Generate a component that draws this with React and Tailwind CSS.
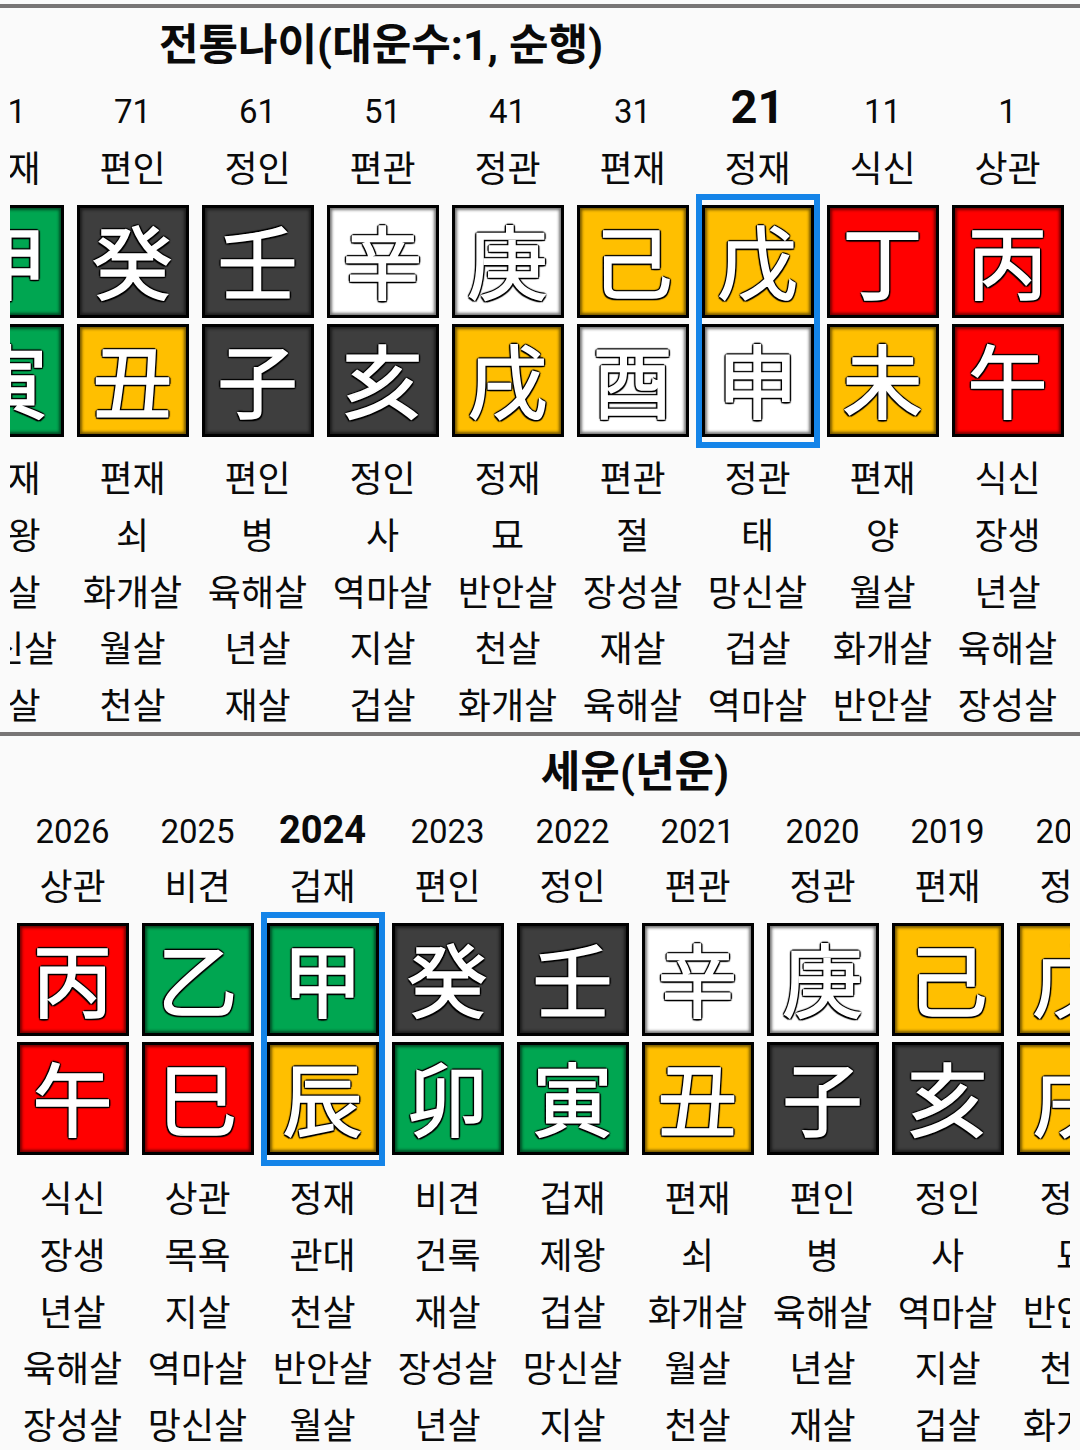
import React from 'react';

const EL = {
  甲: 'wood', 乙: 'wood', 寅: 'wood', 卯: 'wood',
  丙: 'fire', 丁: 'fire', 巳: 'fire', 午: 'fire',
  戊: 'earth', 己: 'earth', 辰: 'earth', 戌: 'earth', 丑: 'earth', 未: 'earth',
  庚: 'metal', 辛: 'metal', 申: 'metal', 酉: 'metal',
  壬: 'water', 癸: 'water', 亥: 'water', 子: 'water',
};
const BG = {
  wood: 'bg-[#00a651]',
  fire: 'bg-[#ff0000]',
  earth: 'bg-[#ffbf00]',
  metal: 'bg-white',
  water: 'bg-[#3e3e3e]',
};

const S1 = [
  { n: '81', g: '겁재', s: '甲', b: '寅', bg: '겁재', u: '제왕', r3: '겁살', r4: '망신살', r5: '지살' },
  { n: '71', g: '편인', s: '癸', b: '丑', bg: '편재', u: '쇠', r3: '화개살', r4: '월살', r5: '천살' },
  { n: '61', g: '정인', s: '壬', b: '子', bg: '편인', u: '병', r3: '육해살', r4: '년살', r5: '재살' },
  { n: '51', g: '편관', s: '辛', b: '亥', bg: '정인', u: '사', r3: '역마살', r4: '지살', r5: '겁살' },
  { n: '41', g: '정관', s: '庚', b: '戌', bg: '정재', u: '묘', r3: '반안살', r4: '천살', r5: '화개살' },
  { n: '31', g: '편재', s: '己', b: '酉', bg: '편관', u: '절', r3: '장성살', r4: '재살', r5: '육해살' },
  { n: '21', g: '정재', s: '戊', b: '申', bg: '정관', u: '태', r3: '망신살', r4: '겁살', r5: '역마살' },
  { n: '11', g: '식신', s: '丁', b: '未', bg: '편재', u: '양', r3: '월살', r4: '화개살', r5: '반안살' },
  { n: '1', g: '상관', s: '丙', b: '午', bg: '식신', u: '장생', r3: '년살', r4: '육해살', r5: '장성살' },
];

const S2 = [
  { n: '2026', g: '상관', s: '丙', b: '午', bg: '식신', u: '장생', r3: '년살', r4: '육해살', r5: '장성살' },
  { n: '2025', g: '비견', s: '乙', b: '巳', bg: '상관', u: '목욕', r3: '지살', r4: '역마살', r5: '망신살' },
  { n: '2024', g: '겁재', s: '甲', b: '辰', bg: '정재', u: '관대', r3: '천살', r4: '반안살', r5: '월살' },
  { n: '2023', g: '편인', s: '癸', b: '卯', bg: '비견', u: '건록', r3: '재살', r4: '장성살', r5: '년살' },
  { n: '2022', g: '정인', s: '壬', b: '寅', bg: '겁재', u: '제왕', r3: '겁살', r4: '망신살', r5: '지살' },
  { n: '2021', g: '편관', s: '辛', b: '丑', bg: '편재', u: '쇠', r3: '화개살', r4: '월살', r5: '천살' },
  { n: '2020', g: '정관', s: '庚', b: '子', bg: '편인', u: '병', r3: '육해살', r4: '년살', r5: '재살' },
  { n: '2019', g: '편재', s: '己', b: '亥', bg: '정인', u: '사', r3: '역마살', r4: '지살', r5: '겁살' },
  { n: '2018', g: '정재', s: '戊', b: '戌', bg: '정재', u: '묘', r3: '반안살', r4: '천살', r5: '화개살' },
  { n: '2017', g: '식신', s: '丁', b: '酉', bg: '편관', u: '절', r3: '장성살', r4: '재살', r5: '육해살' },
];

function Box({ ch }) {
  return (
    <div
      className={`w-[112px] h-[113px] border-[3px] border-black shadow-[inset_0_0_3px_2px_rgba(0,0,0,0.55)] flex items-center justify-center pb-[8px] ${BG[EL[ch]]}`}
    >
      <span className="text-[80px] leading-none text-white [font-family:'Noto_Sans_CJK_KR',sans-serif] [-webkit-text-stroke:1.5px_#fff] [text-shadow:2px_0_1px_#000,-2px_0_1px_#000,0_2px_1px_#000,0_-2px_1px_#000,1.5px_1.5px_1px_#000,-1.5px_-1.5px_1px_#000,1.5px_-1.5px_1px_#000,-1.5px_1.5px_1px_#000,0_0_3px_rgba(0,0,0,0.8)]">
        {ch}
      </span>
    </div>
  );
}

function TextRow({ cols, k, cls }) {
  return (
    <div className={`flex ${cls}`}>
      {cols.map((c, i) => (
        <div key={i} className="w-[125px] shrink-0 text-center whitespace-nowrap">
          {c[k]}
        </div>
      ))}
    </div>
  );
}

function Grid({ cols, sel, numMt, boldCls, labelMt, lowerMt }) {
  return (
    <>
      <div className={`flex items-baseline ${numMt}`}>
        {cols.map((c, i) => (
          <div
            key={i}
            className={`w-[125px] shrink-0 text-center leading-[48px] ${i === sel ? boldCls : 'text-[33px]'}`}
          >
            {c.n}
          </div>
        ))}
      </div>
      <TextRow cols={cols} k="g" cls={`${labelMt} h-[48px] leading-[48px] text-[36px]`} />
      <div className="flex">
        {cols.map((c, i) => (
          <div key={i} className="w-[125px] shrink-0 flex justify-center">
            <div
              className={`w-[124px] border-[6px] pt-[5px] pb-[5px] flex flex-col items-center gap-[6px] ${i === sel ? 'border-[#1484e8]' : 'border-transparent'}`}
            >
              <Box ch={c.s} />
              <Box ch={c.b} />
            </div>
          </div>
        ))}
      </div>
      <div className={`flex flex-col gap-[6.75px] ${lowerMt} text-[36px]`}>
        {['bg', 'u', 'r3', 'r4', 'r5'].map((k) => (
          <TextRow key={k} cols={cols} k={k} cls="h-[50px] leading-[50px]" />
        ))}
      </div>
    </>
  );
}

export default function App() {
  return (
    <div className="w-[1080px] h-[1450px] overflow-hidden bg-[#fafafa] text-[#0a0a0a] [font-family:Roboto,'Noto_Sans_CJK_KR',sans-serif]">
      <div className="h-[4px]" />
      <div className="h-[4px] bg-[#787575]" />

      <div className="pr-[318px] mt-[9px] h-[56px] leading-[56px] text-[43px] font-bold text-center whitespace-nowrap">
        전통나이(대운수:1, 순행)
      </div>
      <div className="mx-[10px] overflow-hidden flex justify-end">
        <div className="w-[1125px] shrink-0">
          <Grid
            cols={S1}
            sel={6}
            numMt="mt-[10px]"
            boldCls="text-[47px] font-bold"
            labelMt="mt-[10px]"
            lowerMt="mt-[7px]"
          />
        </div>
      </div>

      <div className="h-[4px] bg-[#787575]" />

      <div className="pl-[190px] mt-[8px] h-[56px] leading-[56px] text-[43px] font-bold text-center whitespace-nowrap">
        세운(년운)
      </div>
      <div className="mx-[10px] overflow-hidden">
        <div className="w-[1250px] shrink-0">
          <Grid
            cols={S2}
            sel={2}
            numMt="mt-[6px]"
            boldCls="text-[38px] font-bold"
            labelMt="mt-[8px]"
            lowerMt="mt-[9px]"
          />
        </div>
      </div>
    </div>
  );
}
